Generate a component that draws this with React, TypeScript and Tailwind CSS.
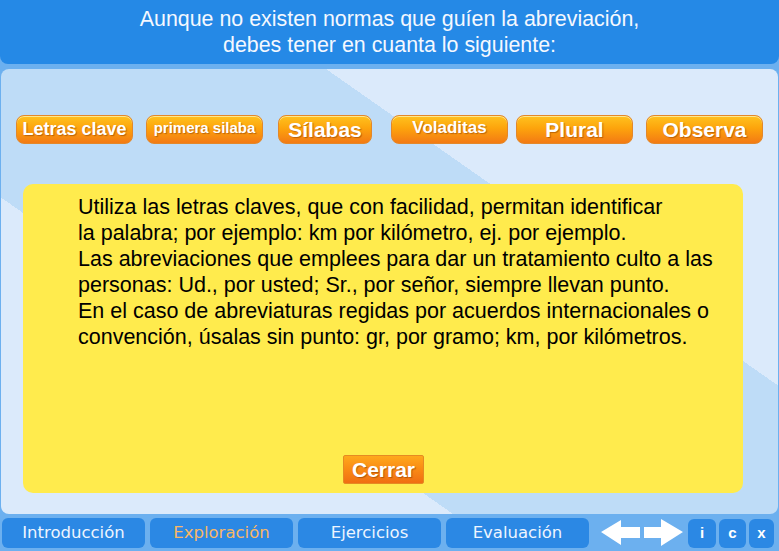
import React from 'react';

const tabs = ['Introducción', 'Exploración', 'Ejercicios', 'Evaluación'];

const orangeBtn =
  'h-[29px] rounded-[8px] border border-[#e3882a] bg-[linear-gradient(#ffc21e,#fda40c_45%,#f37a14)] text-white font-bold flex items-center justify-center [text-shadow:1px_1px_1px_rgba(140,60,0,0.55)] shadow-[inset_0_1px_0_rgba(255,240,170,0.8)]';

const App = () => {
  return (
    <div className="w-[779px] h-[551px] overflow-hidden flex flex-col bg-[#6cb0ef] font-[family-name:Liberation_Sans,Arial,sans-serif]">
      {/* header */}
      <div className="h-[64px] shrink-0 bg-[#2589e6] rounded-b-[8px] flex flex-col items-center justify-center text-[#f4f8ff] text-[21.4px] leading-[26px]">
        <div>Aunque no existen normas que guíen la abreviación,</div>
        <div>debes tener en cuanta lo siguiente:</div>
      </div>

      {/* panel */}
      <div className="mt-[5px] mx-[1px] h-[445px] shrink-0 rounded-[8px] bg-[linear-gradient(35deg,#dbeafb_32%,#bedcf7_32%,#bedcf7_68%,#dbeafb_68%)] flex flex-col">
        <div className="flex pt-[46px] pl-[15px]">
          <button type="button" className={`${orangeBtn} w-[117px] text-[18px]`}>
            Letras clave
          </button>
          <button type="button" className={`${orangeBtn} w-[117px] ml-[13px] text-[15px] pb-[2px]`}>
            primera silaba
          </button>
          <button type="button" className={`${orangeBtn} w-[94px] ml-[15px] text-[21px]`}>
            Sílabas
          </button>
          <button type="button" className={`${orangeBtn} w-[117px] ml-[19px] text-[17px] pb-[3px]`}>
            Voladitas
          </button>
          <button type="button" className={`${orangeBtn} w-[117px] ml-[8px] text-[21px]`}>
            Plural
          </button>
          <button type="button" className={`${orangeBtn} w-[117px] ml-[13px] text-[21px]`}>
            Observa
          </button>
        </div>

        <div className="mt-[40px] ml-[22px] w-[720px] h-[309px] rounded-[10px] bg-[#ffeb4d] flex flex-col pl-[55px] pt-[10px]">
          <div className="text-black text-[21.5px] leading-[26px]">
            <div>Utiliza las letras claves, que con facilidad, permitan identificar</div>
            <div>la palabra; por ejemplo: km por kilómetro, ej. por ejemplo.</div>
            <div>Las abreviaciones que emplees para dar un tratamiento culto a las</div>
            <div>personas: Ud., por usted; Sr., por señor, siempre llevan punto.</div>
            <div>En el caso de abreviaturas regidas por acuerdos internacionales o</div>
            <div>convención, úsalas sin punto: gr, por gramo; km, por kilómetros.</div>
          </div>
          <button
            type="button"
            className="mt-auto mb-[9px] ml-[265px] w-[81px] h-[29px] rounded-[2px] border border-[#e68a22] bg-[linear-gradient(#ffa81c,#f98a14_50%,#f06e12)] text-white font-bold text-[21px] flex items-center justify-center [text-shadow:1px_1px_1px_rgba(140,60,0,0.6)]"
          >
            Cerrar
          </button>
        </div>
      </div>

      {/* nav */}
      <div className="flex-1 flex items-start pt-[4px] pl-[2px]">
        <div className="flex gap-[5px]">
          {tabs.map((t) => (
            <div
              key={t}
              className={`w-[143px] h-[30px] rounded-[6px] bg-[#2b88e4] flex items-center justify-center text-[16.5px] font-[family-name:DejaVu_Sans,Verdana,sans-serif] ${
                t === 'Exploración' ? 'text-[#f9b766]' : 'text-[#eef5ff]'
              }`}
            >
              {t}
            </div>
          ))}
        </div>
        <svg width="83" height="30" viewBox="0 0 83 30" className="ml-[11px]">
          <polygon points="1,14 21,2 21,9 40,9 40,20 21,20 21,27" fill="#fff" />
          <polygon points="44,9 61,9 61,1 83,14 61,28 61,20 44,20" fill="#fff" />
        </svg>
        <div className="flex ml-[5px] gap-[3px] pt-[1px]">
          <div className="w-[28px] h-[29px] rounded-[6px] bg-[#2b88e4] text-white font-bold text-[15px] flex items-center justify-center">
            i
          </div>
          <div className="w-[27px] h-[29px] rounded-[6px] bg-[#2b88e4] text-white font-bold text-[15px] flex items-center justify-center">
            c
          </div>
          <div className="w-[25px] h-[29px] rounded-[6px] bg-[#2b88e4] text-white font-bold text-[15px] flex items-center justify-center">
            x
          </div>
        </div>
      </div>
    </div>
  );
};

export default App;
